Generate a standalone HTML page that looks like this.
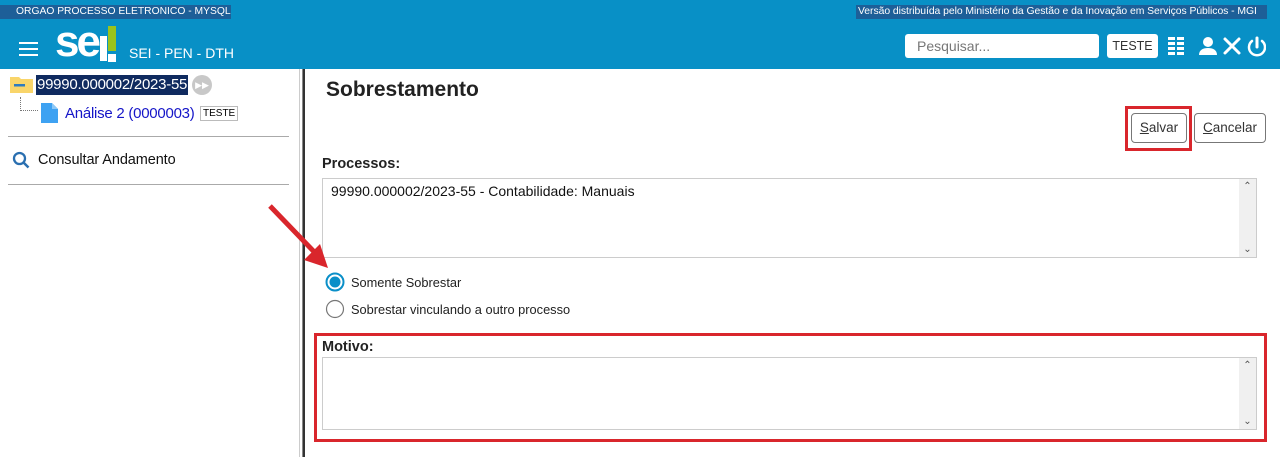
<!DOCTYPE html>
<html><head><meta charset="utf-8"><style>
*{margin:0;padding:0;box-sizing:border-box}
body{width:1280px;height:457px;overflow:hidden;background:#fff;font-family:"Liberation Sans",Arial,sans-serif;position:relative}
.abs{position:absolute;white-space:nowrap}
#hdr{left:0;top:0;width:1280px;height:69px;background:#0890c6}
.t{font-size:10.5px;color:#fff;background:#1d5f98;height:14px;line-height:14px;top:5px;overflow:hidden}
.ta{border:1px solid #ccc;background:#fff}
.sb{position:absolute;right:0;top:0;bottom:0;width:17px;background:#f0f0f0;font-size:10px;color:#555;text-align:center}
.btn{border:1px solid #777;border-radius:4px;background:#fff;font-size:13.5px;color:#333;text-align:center;line-height:28px}
</style></head><body>
<div id="hdr" class="abs"></div>
<div class="abs t" style="left:0;width:231px;padding-left:16px;font-size:10.3px">ORGAO PROCESSO ELETRONICO - MYSQL</div>
<div class="abs t" style="left:856px;width:411px;padding-left:2px;font-size:10.4px;letter-spacing:-0.05px">Versão distribuída pelo Ministério da Gestão e da Inovação em Serviços Públicos - MGI</div>
<div class="abs" style="left:19px;top:42px;width:19px;height:2px;background:#fff;box-shadow:0 6px 0 #fff,0 12px 0 #fff"></div>
<div class="abs" style="left:55px;top:22px;font-size:44px;font-weight:bold;color:#fff;letter-spacing:-3px;line-height:40px">se</div>
<div class="abs" style="left:100px;top:36px;width:7px;height:25px;background:#fff"></div>
<div class="abs" style="left:108px;top:26px;width:8px;height:25px;background:#9bc31c"></div>
<div class="abs" style="left:108px;top:54px;width:8px;height:8px;background:#fff"></div>
<div class="abs" style="left:129px;top:45px;font-size:14px;color:#fff">SEI - PEN - DTH</div>
<div class="abs" style="left:905px;top:34px;width:194px;height:24px;background:#fff;border-radius:3px;font-size:14px;color:#777;padding:4px 12px">Pesquisar...</div>
<div class="abs" style="left:1107px;top:34px;width:51px;height:24px;background:#fff;border-radius:3px;font-size:12.5px;color:#333;text-align:center;line-height:24px">TESTE</div>
<svg class="abs" style="left:1166px;top:34px" width="100" height="24" viewBox="0 0 100 24">
<g fill="#fff"><rect x="2" y="3" width="7" height="3"/><rect x="11" y="3" width="7" height="3"/><rect x="2" y="8" width="7" height="3"/><rect x="11" y="8" width="7" height="3"/><rect x="2" y="13" width="7" height="3"/><rect x="11" y="13" width="7" height="3"/><rect x="2" y="18" width="7" height="3"/><rect x="11" y="18" width="7" height="3"/>
<circle cx="42" cy="8" r="5"/><path d="M33 21c0-5 4-7 9-7s9 2 9 7z"/></g>
<g stroke="#fff" stroke-width="3" fill="none" stroke-linecap="round"><path d="M59 5l14 14M73 5L59 19"/><path d="M91 4v9"/><path d="M86 7a8 8 0 1 0 10 0" stroke-width="2.5"/></g>
</svg>
<!-- left -->
<svg class="abs" style="left:10px;top:74px" width="24" height="20"><path d="M0 3h9l2 2h12v14H0z" fill="#f9d56a"/><rect x="4" y="10" width="11" height="2.5" fill="#2f7bbf"/></svg>
<div class="abs" style="left:36px;top:75px;height:20px;background:#0f2a5f;color:#fff;font-size:15px;line-height:20px;padding:0 1px;letter-spacing:-0.25px">99990.000002/2023-55</div>
<div class="abs" style="left:192px;top:75px;width:20px;height:20px;border-radius:50%;background:#c8c8c8;color:#fff;font-size:9px;text-align:center;line-height:20px">▶▶</div>
<div class="abs" style="left:20px;top:97px;height:14px;width:18px;border-left:1px dotted #777;border-bottom:1px dotted #777"></div>
<svg class="abs" style="left:41px;top:103px" width="18" height="20"><path d="M0 0h11l6 6v14H0z" fill="#3ea2f2"/><path d="M11 0v6h6" fill="#8cc8f7"/></svg>
<div class="abs" style="left:65px;top:105px;font-size:15px;color:#1515c8;letter-spacing:-0.25px">Análise 2 (0000003)</div>
<div class="abs" style="left:200px;top:106px;border:1px solid #bbb;font-size:10px;padding:1px 2px;color:#000">TESTE</div>
<div class="abs" style="left:8px;top:136px;width:281px;height:1px;background:#aaa"></div>
<svg class="abs" style="left:12px;top:151px" width="20" height="20"><circle cx="7.5" cy="7.5" r="5.5" stroke="#2a6fb0" stroke-width="2.3" fill="none"/><path d="M11.5 11.5l5 5" stroke="#2a6fb0" stroke-width="2.5"/></svg>
<div class="abs" style="left:38px;top:152px;font-size:14.5px;color:#111;letter-spacing:-0.1px">Consultar Andamento</div>
<div class="abs" style="left:8px;top:184px;width:281px;height:1px;background:#aaa"></div>
<div class="abs" style="left:299px;top:69px;width:1px;height:388px;background:#ccc"></div>
<div class="abs" style="left:302px;top:69px;width:3px;height:388px;background:#333;border-left:1px solid #888"></div>
<!-- right -->
<div class="abs" style="left:326px;top:78px;font-size:21px;font-weight:bold;color:#222">Sobrestamento</div>
<div class="abs" style="left:1125px;top:106px;width:67px;height:45px;border:3px solid #d9262c"></div>
<div class="abs btn" style="left:1131px;top:113px;width:56px;height:30px"><u>S</u>alvar</div>
<div class="abs btn" style="left:1194px;top:113px;width:72px;height:30px"><u>C</u>ancelar</div>
<div class="abs" style="left:322px;top:156px;font-size:14.5px;font-weight:bold;color:#222">Processos:</div>
<div class="abs ta" style="left:322px;top:178px;width:935px;height:80px"><div style="font-size:14px;color:#111;padding:4px 8px">99990.000002/2023-55 - Contabilidade: Manuais</div><div class="sb"><div style="margin-top:2px">⌃</div><div style="position:absolute;bottom:2px;width:100%">⌄</div></div></div>
<svg class="abs" style="left:262px;top:198px" width="80" height="75"><path d="M8 8L60 62" stroke="#d9262c" stroke-width="5"/><path d="M66 70L42 62L58 46z" fill="#d9262c"/></svg>
<svg class="abs" style="left:325px;top:272px" width="22" height="48"><circle cx="10" cy="10" r="8.5" fill="#fff" stroke="#0a8fc8" stroke-width="2"/><circle cx="10" cy="10" r="5.5" fill="#0a8fc8"/><circle cx="10" cy="37" r="8.5" fill="#fff" stroke="#777" stroke-width="1.2"/></svg>
<div class="abs" style="left:351px;top:275px;font-size:12.8px;color:#222">Somente Sobrestar</div>
<div class="abs" style="left:351px;top:302px;font-size:12.8px;color:#222">Sobrestar vinculando a outro processo</div>
<div class="abs" style="left:314px;top:333px;width:953px;height:109px;border:3px solid #d9262c"></div>
<div class="abs" style="left:322px;top:339px;font-size:14.5px;font-weight:bold;color:#222">Motivo:</div>
<div class="abs ta" style="left:322px;top:357px;width:935px;height:73px"><div class="sb"><div style="margin-top:2px">⌃</div><div style="position:absolute;bottom:2px;width:100%">⌄</div></div></div>
</body></html>
